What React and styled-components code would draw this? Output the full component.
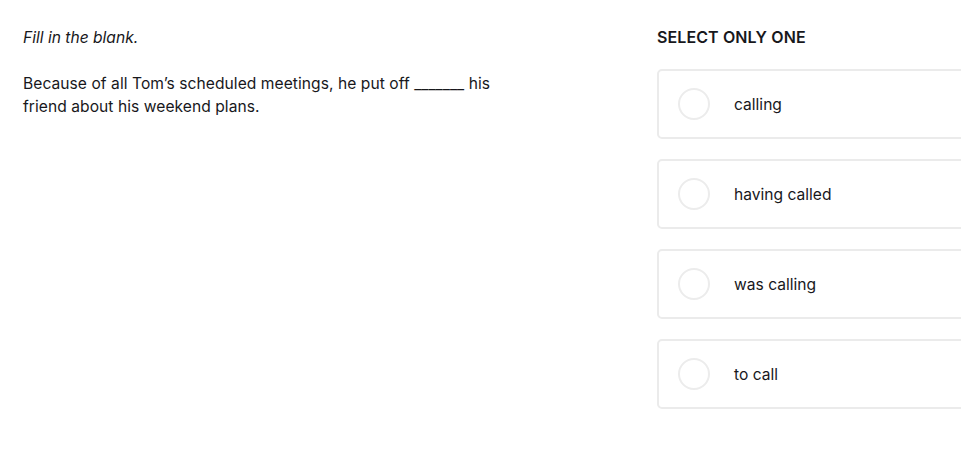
import styled, { createGlobalStyle } from "styled-components";

const GlobalStyle = createGlobalStyle`
  html, body {
    margin: 0;
    padding: 0;
    background: #ffffff;
    overflow: hidden;
  }
  body {
    font-family: Inter, "Liberation Sans", sans-serif;
    color: #18181c;
  }
`;

const options = ["calling", "having called", "was calling", "to call"];

export default function App() {
  return (
    <>
      <GlobalStyle />
      <Page>
        <Question>
          <Instruction>Fill in the blank.</Instruction>
          <Prompt>
            Because of all Tom’s scheduled meetings, he put off _______ his
            friend about his weekend plans.
          </Prompt>
        </Question>
        <Answers>
          <Heading>SELECT ONLY ONE</Heading>
          <OptionList>
            {options.map((opt) => (
              <Option key={opt}>
                <Radio />
                <OptionText>{opt}</OptionText>
              </Option>
            ))}
          </OptionList>
        </Answers>
      </Page>
    </>
  );
}

const Page = styled.div`
  display: flex;
  width: 961px;
  height: 455px;
  padding: 28px 0 0 23px;
  box-sizing: border-box;
`;

const Question = styled.div`
  width: 634px;
  flex-shrink: 0;
  display: flex;
  flex-direction: column;
`;

const Instruction = styled.p`
  margin: 0;
  font-size: 15.6px;
  line-height: 19px;
  font-style: italic;
`;

const Prompt = styled.p`
  margin: 25px 0 0;
  width: 480px;
  font-size: 15.6px;
  line-height: 23px;
  letter-spacing: 0.05px;
`;

const Answers = styled.div`
  display: flex;
  flex-direction: column;
  flex-shrink: 0;
`;

const Heading = styled.h2`
  margin: 0;
  font-size: 16px;
  line-height: 19px;
  font-weight: 600;
  letter-spacing: 0.1px;
`;

const OptionList = styled.div`
  display: flex;
  flex-direction: column;
  gap: 20px;
  margin-top: 22px;
`;

const Option = styled.div`
  display: flex;
  align-items: center;
  width: 340px;
  height: 70px;
  padding-left: 19px;
  box-sizing: border-box;
  border: 2px solid #ebebeb;
  border-radius: 5px;
  background: #fff;
`;

const Radio = styled.span`
  width: 28px;
  height: 28px;
  border: 2px solid #ececec;
  border-radius: 50%;
  flex-shrink: 0;
`;

const OptionText = styled.span`
  margin-left: 24px;
  font-size: 15.6px;
  line-height: 19px;
`;
